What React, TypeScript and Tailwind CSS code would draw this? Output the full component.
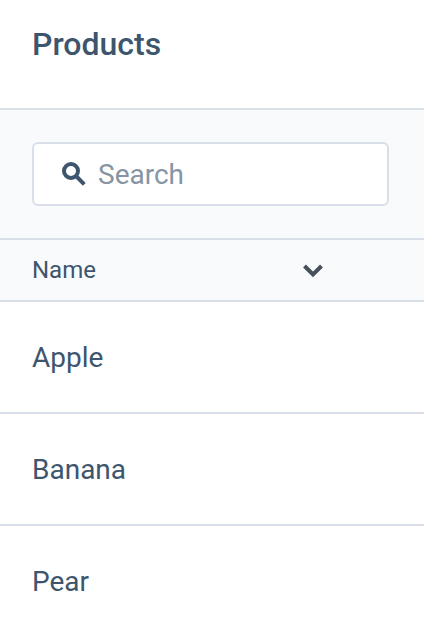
const products = ["Apple", "Banana", "Pear"];

export default function App() {
  return (
    <main className="h-[633px] w-[424px] overflow-hidden bg-white font-[Roboto,sans-serif] text-[#3d556d]">
      <header className="flex h-[108px] items-start px-8 pt-6">
        <h1 className="text-[32px] leading-10 font-medium">Products</h1>
      </header>
      <SearchBar />
      <ProductTable />
    </main>
  );
}

function SearchBar() {
  return (
    <div className="h-[130px] border-t-2 border-[#d8e0e8] bg-[#f9fafc] px-8 pt-8">
      <label className="flex h-16 w-[357px] items-center rounded-md border-2 border-[#d8dfe8] bg-white pl-6">
        <SearchIcon />
        <input
          type="text"
          placeholder="Search"
          className="ml-2 w-60 pt-0.5 text-[28px] leading-8 outline-none placeholder:text-[#8695a4]"
        />
      </label>
    </div>
  );
}

function ProductTable() {
  return (
    <section>
      <div className="flex h-16 items-center border-y-2 border-[#d8dfe8] bg-[#f9fafc] px-8">
        <span className="w-[266px] text-2xl">Name</span>
        <ChevronIcon />
      </div>
      <ul>
        {products.map((product) => (
          <li key={product} className="flex h-28 items-center border-b-2 border-[#d8dfe8] px-8 pt-0.5 text-[28px]">
            {product}
          </li>
        ))}
      </ul>
    </section>
  );
}

function SearchIcon() {
  return (
    <svg viewBox="0 0 32 32" className="size-8 shrink-0" fill="none" stroke="#3d556d" strokeWidth="4">
      <circle cx="13" cy="13" r="7" />
      <path d="m17.5 17.5 8.8 8.8" />
    </svg>
  );
}

function ChevronIcon() {
  return (
    <svg viewBox="0 0 32 32" className="size-8" fill="none" stroke="#47515c" strokeWidth="4">
      <path d="m6.5 12 8.5 8.5 8.5-8.5" />
    </svg>
  );
}
